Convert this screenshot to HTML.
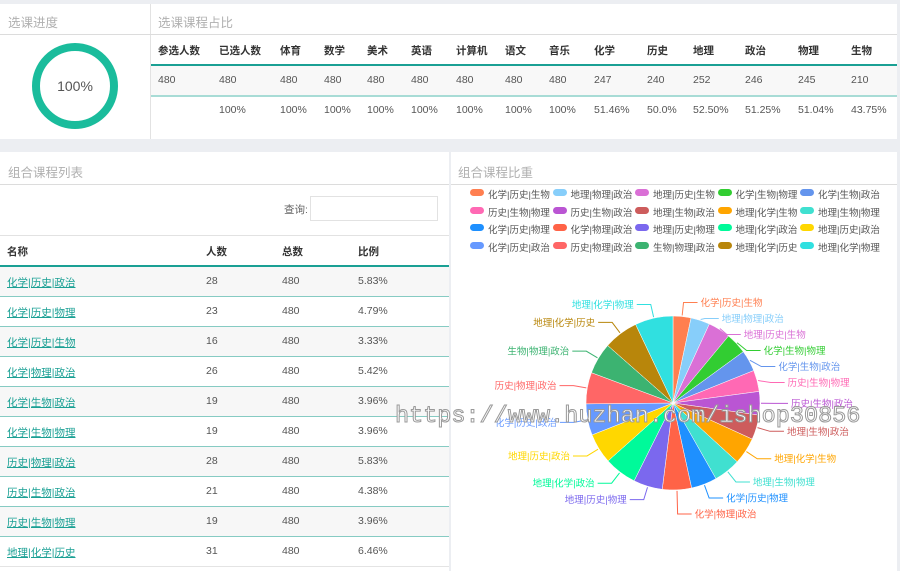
<!DOCTYPE html>
<html><head><meta charset="utf-8">
<style>
*{margin:0;padding:0;box-sizing:border-box}
body{width:900px;height:571px;background:#eceef2;font-family:"Liberation Sans","Noto Sans CJK SC",sans-serif;position:relative;overflow:hidden;color:#555}
.p{position:absolute;background:#fff}
.t{position:absolute;font-size:12.5px;color:#b0b0b0}
.a{position:absolute;font-size:10.5px;white-space:nowrap}
.h{font-weight:bold;color:#333}
.ln{position:absolute;height:1px}
a{color:#1aa094;text-decoration:underline}
</style></head><body>
<div class="p" style="left:0;top:4px;width:897px;height:135px"></div>
<div style="position:absolute;left:150px;top:4px;width:1px;height:135px;background:#e2e2e2"></div>
<div class="ln" style="left:0;top:34px;width:897px;background:#dcdcdc"></div>
<div class="t" style="left:8px;top:12px">选课进度</div>
<div class="t" style="left:158px;top:12px">选课课程占比</div>
<svg style="position:absolute;left:0;top:35px" width="150" height="104">
<circle cx="75" cy="51" r="39" fill="none" stroke="#1abc9c" stroke-width="8"/>
<text x="75" y="56" text-anchor="middle" font-size="14" fill="#555" font-family="Liberation Sans">100%</text></svg>
<div style="position:absolute;left:151px;top:66px;width:746px;height:29px;background:#f8f8f8"></div>
<div class="ln" style="left:151px;top:64px;width:746px;height:2px;background:#1aa094"></div>
<div class="ln" style="left:151px;top:95px;width:746px;height:2px;background:#a8dcd6"></div>
<div id="top"></div>
<div class="p" style="left:0;top:152px;width:449px;height:419px"></div>
<div class="ln" style="left:0;top:184px;width:449px;background:#dcdcdc"></div>
<div class="t" style="left:8px;top:162px">组合课程列表</div>
<div class="a" style="left:284px;top:202px;color:#666">查询:</div>
<div style="position:absolute;left:310px;top:196px;width:128px;height:25px;border:1px solid #e2e2e2"></div>
<div class="ln" style="left:0;top:235px;width:449px;background:#e2e2e2"></div>
<div class="ln" style="left:0;top:265px;width:449px;height:2px;background:#1aa094"></div>
<div id="bl"></div>
<div class="p" style="left:451px;top:152px;width:446px;height:419px"></div>
<div class="ln" style="left:451px;top:184px;width:446px;background:#dcdcdc"></div>
<div class="t" style="left:458px;top:162px">组合课程比重</div>
<div id="leg"></div>
<svg id="pie" style="position:absolute;left:451px;top:260px" width="446" height="311"></svg>
<div style="position:absolute;left:395px;top:403px;font-family:'Liberation Mono',monospace;font-size:23.5px;color:#fff;-webkit-text-stroke:1px #999;white-space:nowrap;letter-spacing:0px">https://www.huzhan.com/ishop30856</div>
<script>
var H=["参选人数","已选人数","体育","数学","美术","英语","计算机","语文","音乐","化学","历史","地理","政治","物理","生物"];
var X=[158,219,280,324,367,411,456,505,549,594,647,693,745,798,851];
var R1=["480","480","480","480","480","480","480","480","480","247","240","252","246","245","210"];
var R2=["","100%","100%","100%","100%","100%","100%","100%","100%","51.46%","50.0%","52.50%","51.25%","51.04%","43.75%"];
var s="";
for(var i=0;i<15;i++){s+='<div class="a h" style="left:'+X[i]+'px;top:43px">'+H[i]+'</div>';
s+='<div class="a" style="left:'+X[i]+'px;top:74px">'+R1[i]+'</div>';
s+='<div class="a" style="left:'+X[i]+'px;top:104px">'+R2[i]+'</div>';}
document.getElementById("top").innerHTML=s;
var rows=[["化学|历史|政治",28,"5.83%"],["化学|历史|物理",23,"4.79%"],["化学|历史|生物",16,"3.33%"],["化学|物理|政治",26,"5.42%"],["化学|生物|政治",19,"3.96%"],["化学|生物|物理",19,"3.96%"],["历史|物理|政治",28,"5.83%"],["历史|生物|政治",21,"4.38%"],["历史|生物|物理",19,"3.96%"],["地理|化学|历史",31,"6.46%"]];
s='<div class="a h" style="left:7px;top:244px">名称</div><div class="a h" style="left:206px;top:244px">人数</div><div class="a h" style="left:282px;top:244px">总数</div><div class="a h" style="left:358px;top:244px">比例</div>';
for(var i=0;i<10;i++){var y=267+i*30;
if(i%2==0)s+='<div style="position:absolute;left:0;top:'+y+'px;width:449px;height:29px;background:#f7f7f7"></div>';
s+='<div class="ln" style="left:0;top:'+(y+29)+'px;width:449px;background:'+(i==9?'#e4e4e4':'#86cbc3')+'"></div>';
s+='<div class="a" style="left:7px;top:'+(y+8)+'px"><a>'+rows[i][0]+'</a></div><div class="a" style="left:206px;top:'+(y+8)+'px">'+rows[i][1]+'</div><div class="a" style="left:282px;top:'+(y+8)+'px">480</div><div class="a" style="left:358px;top:'+(y+8)+'px">'+rows[i][2]+'</div>';}
document.getElementById("bl").innerHTML=s;
var D=[["化学|历史|生物",16,"#ff7f50"],["地理|物理|政治",17,"#87cefa"],["地理|历史|生物",20,"#da70d6"],["化学|生物|物理",19,"#32cd32"],["化学|生物|政治",19,"#6495ed"],["历史|生物|物理",19,"#ff69b4"],["历史|生物|政治",21,"#ba55d3"],["地理|生物|政治",22,"#cd5c5c"],["地理|化学|生物",24,"#ffa500"],["地理|生物|物理",24,"#40e0d0"],["化学|历史|物理",23,"#1e90ff"],["化学|物理|政治",26,"#ff6347"],["地理|历史|物理",26,"#7b68ee"],["地理|化学|政治",29,"#00fa9a"],["地理|历史|政治",27,"#ffd700"],["化学|历史|政治",28,"#6699ff"],["历史|物理|政治",28,"#ff6666"],["生物|物理|政治",28,"#3cb371"],["地理|化学|历史",31,"#b8860b"],["地理|化学|物理",34,"#30e0e0"]];
s="";
for(var i=0;i<20;i++){var r=Math.floor(i/5),c=i%5,x=470+c*82.5,y=187+r*17.7;
s+='<div style="position:absolute;left:'+x+'px;top:'+(y+2)+'px;width:14px;height:7px;border-radius:4px;background:'+D[i][2]+'"></div><div class="a" style="left:'+(x+18)+'px;top:'+y+'px;font-size:9.5px;color:#555">'+D[i][0]+'</div>';}
document.getElementById("leg").innerHTML=s;
var tot=0;D.forEach(function(d){tot+=d[1]});
var cx=222,cy=143,R=87,a=-Math.PI/2;s="";var L=[];
D.forEach(function(d){var b=a+d[1]/tot*2*Math.PI;
var x1=cx+R*Math.cos(a),y1=cy+R*Math.sin(a),x2=cx+R*Math.cos(b),y2=cy+R*Math.sin(b);
s+='<path d="M'+cx+' '+cy+'L'+x1+' '+y1+'A'+R+' '+R+' 0 0 1 '+x2+' '+y2+'Z" fill="'+d[2]+'" stroke="#fff" stroke-width="0.5"/>';
var m=(a+b)/2;L.push({d:d,cs:Math.cos(m),sn:Math.sin(m),y:cy+(R+14)*Math.sin(m)});
a=b;});
function adj(arr){arr.sort(function(p,q){return p.y-q.y});
for(var k=1;k<arr.length;k++)if(arr[k].y<arr[k-1].y+16)arr[k].y=arr[k-1].y+16;
var over=arr[arr.length-1].y-300;if(over>0){for(var k=arr.length-1;k>=0;k--){arr[k].y-=over; if(k>0&&arr[k-1].y>arr[k].y-16)arr[k-1].y=arr[k].y-16;}}}
var RS=L.filter(function(l){return l.cs>=0}),LS=L.filter(function(l){return l.cs<0});
adj(RS);adj(LS);
var lab="";
L.forEach(function(l){var d=l.d,cs=l.cs,sn=l.sn;
var px=cx+(R+1)*cs,py=cy+(R+1)*sn,qx=cx+(R+14)*cs,qy=l.y,ex=qx+(cs>=0?14:-14);
lab+='<polyline points="'+px+','+py+' '+qx+','+qy+' '+ex+','+qy+'" fill="none" stroke="'+d[2]+'" stroke-width="1"/>';
lab+='<text x="'+(ex+(cs>=0?3:-3))+'" y="'+(qy+3.5)+'" font-size="9.5" fill="'+d[2]+'" text-anchor="'+(cs>=0?'start':'end')+'" font-family="Liberation Sans,Noto Sans CJK SC,sans-serif">'+d[0]+'</text>';});
document.getElementById("pie").innerHTML=s+lab;
</script>
</body></html>
